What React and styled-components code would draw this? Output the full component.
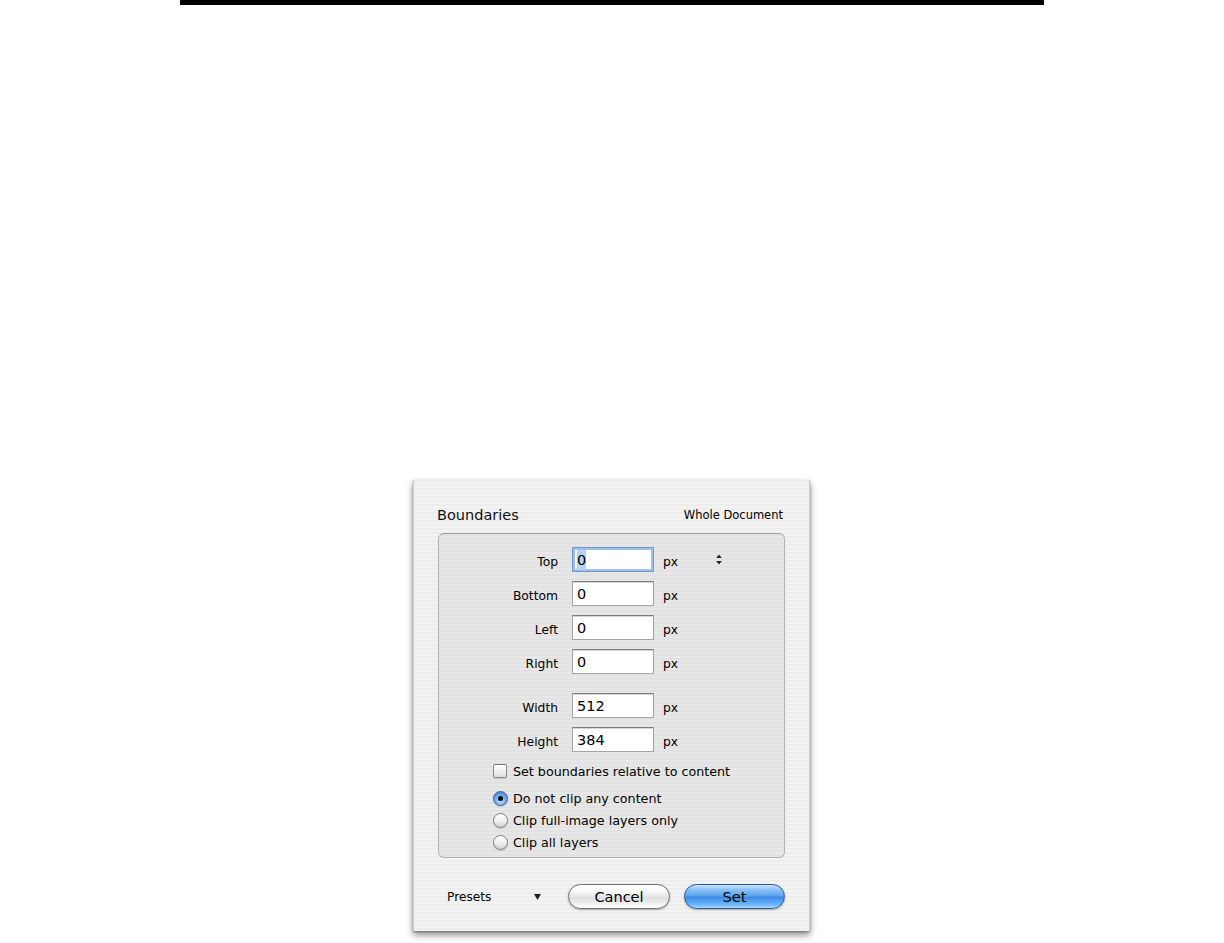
import React from "react";
import styled, { createGlobalStyle } from "styled-components";

const Global = createGlobalStyle`
  html, body { margin: 0; padding: 0; background: #ffffff; }
  body { font-family: "DejaVu Sans", "Liberation Sans", sans-serif; color: #111; }
`;

const Page = styled.div`
  width: 1224px;
  min-height: 943px;
  display: flex;
  flex-direction: column;
`;

const TopRule = styled.div`
  margin-left: 180px;
  width: 864px;
  height: 5px;
  background: #000;
`;

const Dialog = styled.div`
  margin: 475px 0 0 413px;
  width: 397px;
  box-sizing: border-box;
  padding: 0 24px 22px 24px;
  background: repeating-linear-gradient(
    to bottom,
    #ededed 0px,
    #ededed 2px,
    #f3f3f3 2px,
    #f3f3f3 4px
  );
  border-left: 1px solid #cfcfcf;
  border-right: 1px solid #cfcfcf;
  box-shadow: 0 4px 7px rgba(0, 0, 0, 0.45), 0 1px 2px rgba(0, 0, 0, 0.3);
  display: flex;
  flex-direction: column;
`;

const Header = styled.div`
  display: flex;
  align-items: center;
  justify-content: space-between;
  height: 18px;
  margin: 26px 2px 9px -1px;
`;

const Title = styled.div`
  font-size: 14.5px;
  color: #111;
`;

const Scope = styled.div`
  font-size: 11.5px;
  color: #000;
`;

const GroupBox = styled.div`
  box-sizing: border-box;
  height: 325px;
  border: 1px solid #b3b3b3;
  border-top-color: #9e9e9e;
  border-radius: 6px;
  background: repeating-linear-gradient(
    to bottom,
    #e2e2e2 0px,
    #e2e2e2 2px,
    #e7e7e7 2px,
    #e7e7e7 4px
  );
  padding: 13px 0 4px 0;
  display: flex;
  flex-direction: column;
`;

const FieldRow = styled.div`
  display: flex;
  align-items: center;
  height: 25px;
  margin-top: ${(p) => p.$gap ?? 9}px;
  &:first-child { margin-top: 0; }
`;

const Label = styled.div`
  width: 119px;
  text-align: right;
  font-size: 12.3px;
  color: #000;
  padding-top: 4px;
`;

const Field = styled.div`
  box-sizing: border-box;
  margin-left: 14px;
  width: 82px;
  height: 25px;
  background: #fff;
  border: 1px solid ${(p) => (p.$focused ? "#6f97cc" : "#a4a4a4")};
  border-top-color: ${(p) => (p.$focused ? "#6f97cc" : "#7c7c7c")};
  box-shadow: ${(p) =>
    p.$focused ? "inset 0 0 0 2px #9fc0e8" : "inset 0 1px 0 #d6d6d6"};
  padding: 0 0 0 4px;
  display: flex;
  align-items: center;
  font-size: 14.5px;
  color: #000;
`;

const Selected = styled.span`
  background: #b5d3f7;
  padding: 1px 0;
  line-height: 18px;
`;

const Unit = styled.div`
  margin-left: 9px;
  font-size: 12.3px;
  color: #000;
  padding-top: 4px;
`;

const Stepper = styled.svg`
  margin-left: 38px;
  width: 6px;
  height: 11px;
`;

const OptionRow = styled.label`
  display: flex;
  align-items: center;
  height: ${(p) => p.$h}px;
  margin-top: ${(p) => p.$mt ?? 0}px;
  padding-left: 54px;
  font-size: 12.7px;
  color: #000;
  gap: 5px;
`;

const CheckBox = styled.span`
  box-sizing: border-box;
  width: 14px;
  height: 14px;
  margin-right: 1px;
  border: 1px solid #8a8a8a;
  border-top-color: #6f6f6f;
  border-radius: 2px;
  background: linear-gradient(to bottom, #ffffff 0%, #f2f2f2 45%, #dcdcdc 100%);
  box-shadow: 0 1px 1px rgba(0, 0, 0, 0.12);
`;

const Radio = styled.span`
  box-sizing: border-box;
  width: 15px;
  height: 15px;
  border-radius: 50%;
  border: 1px solid ${(p) => (p.$on ? "#3e5f94" : "#7e7e7e")};
  background: ${(p) =>
    p.$on
      ? "radial-gradient(circle at 50% 70%, #bfe2ff 0%, #6fb0f2 45%, #2f74d0 100%)"
      : "linear-gradient(to bottom, #ffffff 0%, #f0f0f0 50%, #d2d2d2 100%)"};
  box-shadow: 0 1px 1px rgba(0, 0, 0, 0.15);
  display: flex;
  align-items: center;
  justify-content: center;
  &::after {
    content: "";
    display: ${(p) => (p.$on ? "block" : "none")};
    width: 5px;
    height: 5px;
    border-radius: 50%;
    background: #0d0d0d;
  }
`;

const Footer = styled.div`
  display: flex;
  align-items: center;
  margin-top: 26px;
  height: 25px;
`;

const Popup = styled.div`
  box-sizing: border-box;
  width: 110px;
  padding-left: 9px;
  padding-right: 7px;
  display: flex;
  align-items: center;
  justify-content: space-between;
  font-size: 12.2px;
  color: #000;
`;

const Buttons = styled.div`
  margin-left: auto;
  display: flex;
  gap: 14px;
`;

const PushButton = styled.button`
  box-sizing: border-box;
  width: ${(p) => p.$w}px;
  height: 25px;
  border-radius: 13px;
  font-family: "DejaVu Sans", "Liberation Sans", sans-serif;
  font-size: 14.5px;
  color: #000;
  padding: 0;
  border: 1px solid ${(p) => (p.$primary ? "#35559a" : "#6e6e6e")};
  background: ${(p) =>
    p.$primary
      ? "linear-gradient(to bottom, #c9e4ff 0%, #8cc2f6 20%, #5aa2ee 48%, #3b88e6 52%, #6cb6fb 85%, #a9dcff 100%)"
      : "linear-gradient(to bottom, #ffffff 0%, #f7f7f7 30%, #e6e6e6 50%, #dcdcdc 52%, #f2f2f2 85%, #ffffff 100%)"};
  box-shadow: 0 1px 2px rgba(0, 0, 0, 0.3);
`;

const fields = [
  { label: "Top", value: "0", focused: true, stepper: true },
  { label: "Bottom", value: "0" },
  { label: "Left", value: "0" },
  { label: "Right", value: "0" },
  { label: "Width", value: "512", gap: 19 },
  { label: "Height", value: "384" },
];

const radios = [
  { text: "Do not clip any content", on: true },
  { text: "Clip full-image layers only" },
  { text: "Clip all layers" },
];

export default function App() {
  return (
    <Page>
      <Global />
      <TopRule />
      <Dialog>
        <Header>
          <Title>Boundaries</Title>
          <Scope>Whole Document</Scope>
        </Header>
        <GroupBox>
          {fields.map((f) => (
            <FieldRow key={f.label} $gap={f.gap}>
              <Label>{f.label}</Label>
              <Field $focused={f.focused}>
                {f.focused ? <Selected>{f.value}</Selected> : f.value}
              </Field>
              <Unit>px</Unit>
              {f.stepper && (
                <Stepper viewBox="0 0 6 11">
                  <path d="M3 0.5 L5.8 4 L0.2 4 Z" fill="#222" />
                  <path d="M3 10.5 L5.8 7 L0.2 7 Z" fill="#222" />
                </Stepper>
              )}
            </FieldRow>
          ))}
          <OptionRow $h={16} $mt={11}>
            <CheckBox />
            Set boundaries relative to content
          </OptionRow>
          {radios.map((r, i) => (
            <OptionRow key={r.text} $h={22} $mt={i === 0 ? 8 : 0}>
              <Radio $on={r.on} />
              {r.text}
            </OptionRow>
          ))}
        </GroupBox>
        <Footer>
          <Popup>
            Presets
            <svg width="7" height="6" viewBox="0 0 7 6">
              <path d="M0 0 L7 0 L3.5 6 Z" fill="#222" />
            </svg>
          </Popup>
          <Buttons>
            <PushButton $w={102}>Cancel</PushButton>
            <PushButton $w={101} $primary>
              Set
            </PushButton>
          </Buttons>
        </Footer>
      </Dialog>
    </Page>
  );
}
